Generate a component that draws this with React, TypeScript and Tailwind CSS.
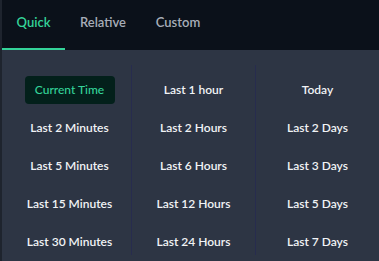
import React from 'react';

const columns: string[][] = [
  ['Current Time', 'Last 2 Minutes', 'Last 5 Minutes', 'Last 15 Minutes', 'Last 30 Minutes'],
  ['Last 1 hour', 'Last 2 Hours', 'Last 6 Hours', 'Last 12 Hours', 'Last 24 Hours'],
  ['Today', 'Last 2 Days', 'Last 3 Days', 'Last 5 Days', 'Last 7 Days'],
];

const tabs = [
  { label: 'Quick', width: 'w-[63px]' },
  { label: 'Relative', width: 'w-[76px]' },
  { label: 'Custom', width: 'w-[74px]' },
];

export default function App() {
  const active = 'Current Time';

  return (
    <div
      className="w-[379px] h-[261px] overflow-hidden bg-[#2d3544] border-l-2 border-[#1e242e] flex flex-col"
      style={{ fontFamily: 'Lato, "Open Sans", sans-serif' }}
    >
      {/* tabs */}
      <div className="h-[50px] bg-[#0b111a] flex items-stretch shrink-0">
        {tabs.map((t, i) => (
          <div
            key={t.label}
            className={`${t.width} flex items-center justify-center text-[13px] font-semibold pb-[3px] border-b-2 ${
              i === 0 ? 'text-[#34d399] border-[#34d399]' : 'text-[#a7adb8] border-transparent'
            }`}
          >
            {t.label}
          </div>
        ))}
      </div>

      {/* options */}
      <div className="flex pl-[6px] pt-[15px]">
        {columns.map((col, ci) => (
          <div
            key={ci}
            className={`flex-1 h-[190px] ${ci > 0 ? 'border-l border-[#272c4e]' : ''}`}
          >
            <div className="pt-[6px] flex flex-col">
              {col.map((item) => (
                <div key={item} className="h-[38px] flex items-center justify-center">
                  {item === active ? (
                    <span className="h-[28px] w-[90px] rounded-[4px] bg-[#03201b] text-[#34d399] text-[12px] font-medium flex items-center justify-center">
                      {item}
                    </span>
                  ) : (
                    <span className="text-[12px] font-semibold text-[#f1f3f6]">{item}</span>
                  )}
                </div>
              ))}
            </div>
          </div>
        ))}
      </div>
    </div>
  );
}
